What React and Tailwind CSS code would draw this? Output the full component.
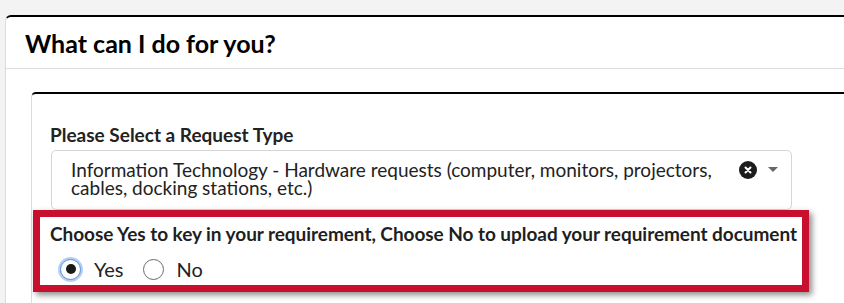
import React, { useState } from "react";

function Radio({ checked, label, onClick }) {
  return (
    <label className="flex items-center cursor-pointer" onClick={onClick}>
      <span
        className={
          checked
            ? "flex items-center justify-center w-[21px] h-[21px] rounded-full border border-[#5b8fd6] bg-white shadow-[0_0_0_2px_rgba(120,170,235,0.55)]"
            : "flex items-center justify-center w-[21px] h-[21px] rounded-full border border-[#6b6b6b] bg-white"
        }
      >
        {checked && <span className="w-[10px] h-[10px] rounded-full bg-[#1a1a1a]" />}
      </span>
      <span className="ml-[13px] text-[20px] leading-[22px] text-[#222]">{label}</span>
    </label>
  );
}

export default function App() {
  const [choice, setChoice] = useState("yes");

  return (
    <div
      className="w-[844px] h-[303px] overflow-hidden bg-[#f3f3f3]"
      style={{ fontFamily: "Lato, 'Noto Sans', sans-serif" }}
    >
      <div className="ml-[5px] mt-[15px] w-[880px] h-[300px] bg-white border-t-2 border-l border-t-black border-l-[#dcdcdc] rounded-tl-[6px]">
        <div className="h-[52px] flex items-center pl-[19px] border-b border-[#dedede]">
          <h1 className="text-[25px] leading-[28px] font-bold text-black">What can I do for you?</h1>
        </div>

        <div className="pl-[25px] pt-[23px]">
          <div className="bg-white border-t-2 border-l border-t-black border-l-[#dcdcdc] rounded-tl-[5px] h-[220px]">
            <div className="pl-[18px] pt-[30px] text-[19px] font-bold text-[#222] leading-[21px]">
              Please Select a Request Type
            </div>

            <div className="ml-[19px] mt-[5px] w-[741px] h-[60px] border border-[#d6d6d6] rounded-[5px] flex items-start">
              <div className="flex-1 pl-[19px] pt-[10px] text-[19px] leading-[18px] text-[#222]">
                Information Technology - Hardware requests (computer, monitors, projectors,
                <br />
                cables, docking stations, etc.)
              </div>
              <div className="flex items-center pt-[10px] pr-[13px]">
                <span className="w-[18px] h-[18px] rounded-full bg-[#1c1c1c] flex items-center justify-center">
                  <svg width="8" height="8" viewBox="0 0 8 8">
                    <path d="M1.5 1.5 L6.5 6.5 M6.5 1.5 L1.5 6.5" stroke="white" strokeWidth="2" strokeLinecap="round" />
                  </svg>
                </span>
                <svg className="ml-[11px]" width="10" height="6" viewBox="0 0 10 6">
                  <path d="M0 0 L10 0 L5 5 Z" fill="#666" />
                </svg>
              </div>
            </div>

            <div className="ml-[1px] w-[776px] h-[82px] border-[7px] border-[#c8102e] shadow-[3px_3px_6px_rgba(0,0,0,0.45)] pl-[10px] pt-[6px]">
              <div className="text-[19px] font-bold text-[#1f1f1f] leading-[22px] whitespace-nowrap tracking-[-0.05px]">
                Choose Yes to key in your requirement, Choose No to upload your requirement document
              </div>
              <div className="flex items-center gap-[19px] mt-[13px] pl-[10px]">
                <Radio checked={choice === "yes"} label="Yes" onClick={() => setChoice("yes")} />
                <Radio checked={choice === "no"} label="No" onClick={() => setChoice("no")} />
              </div>
            </div>
          </div>
        </div>
      </div>
    </div>
  );
}
